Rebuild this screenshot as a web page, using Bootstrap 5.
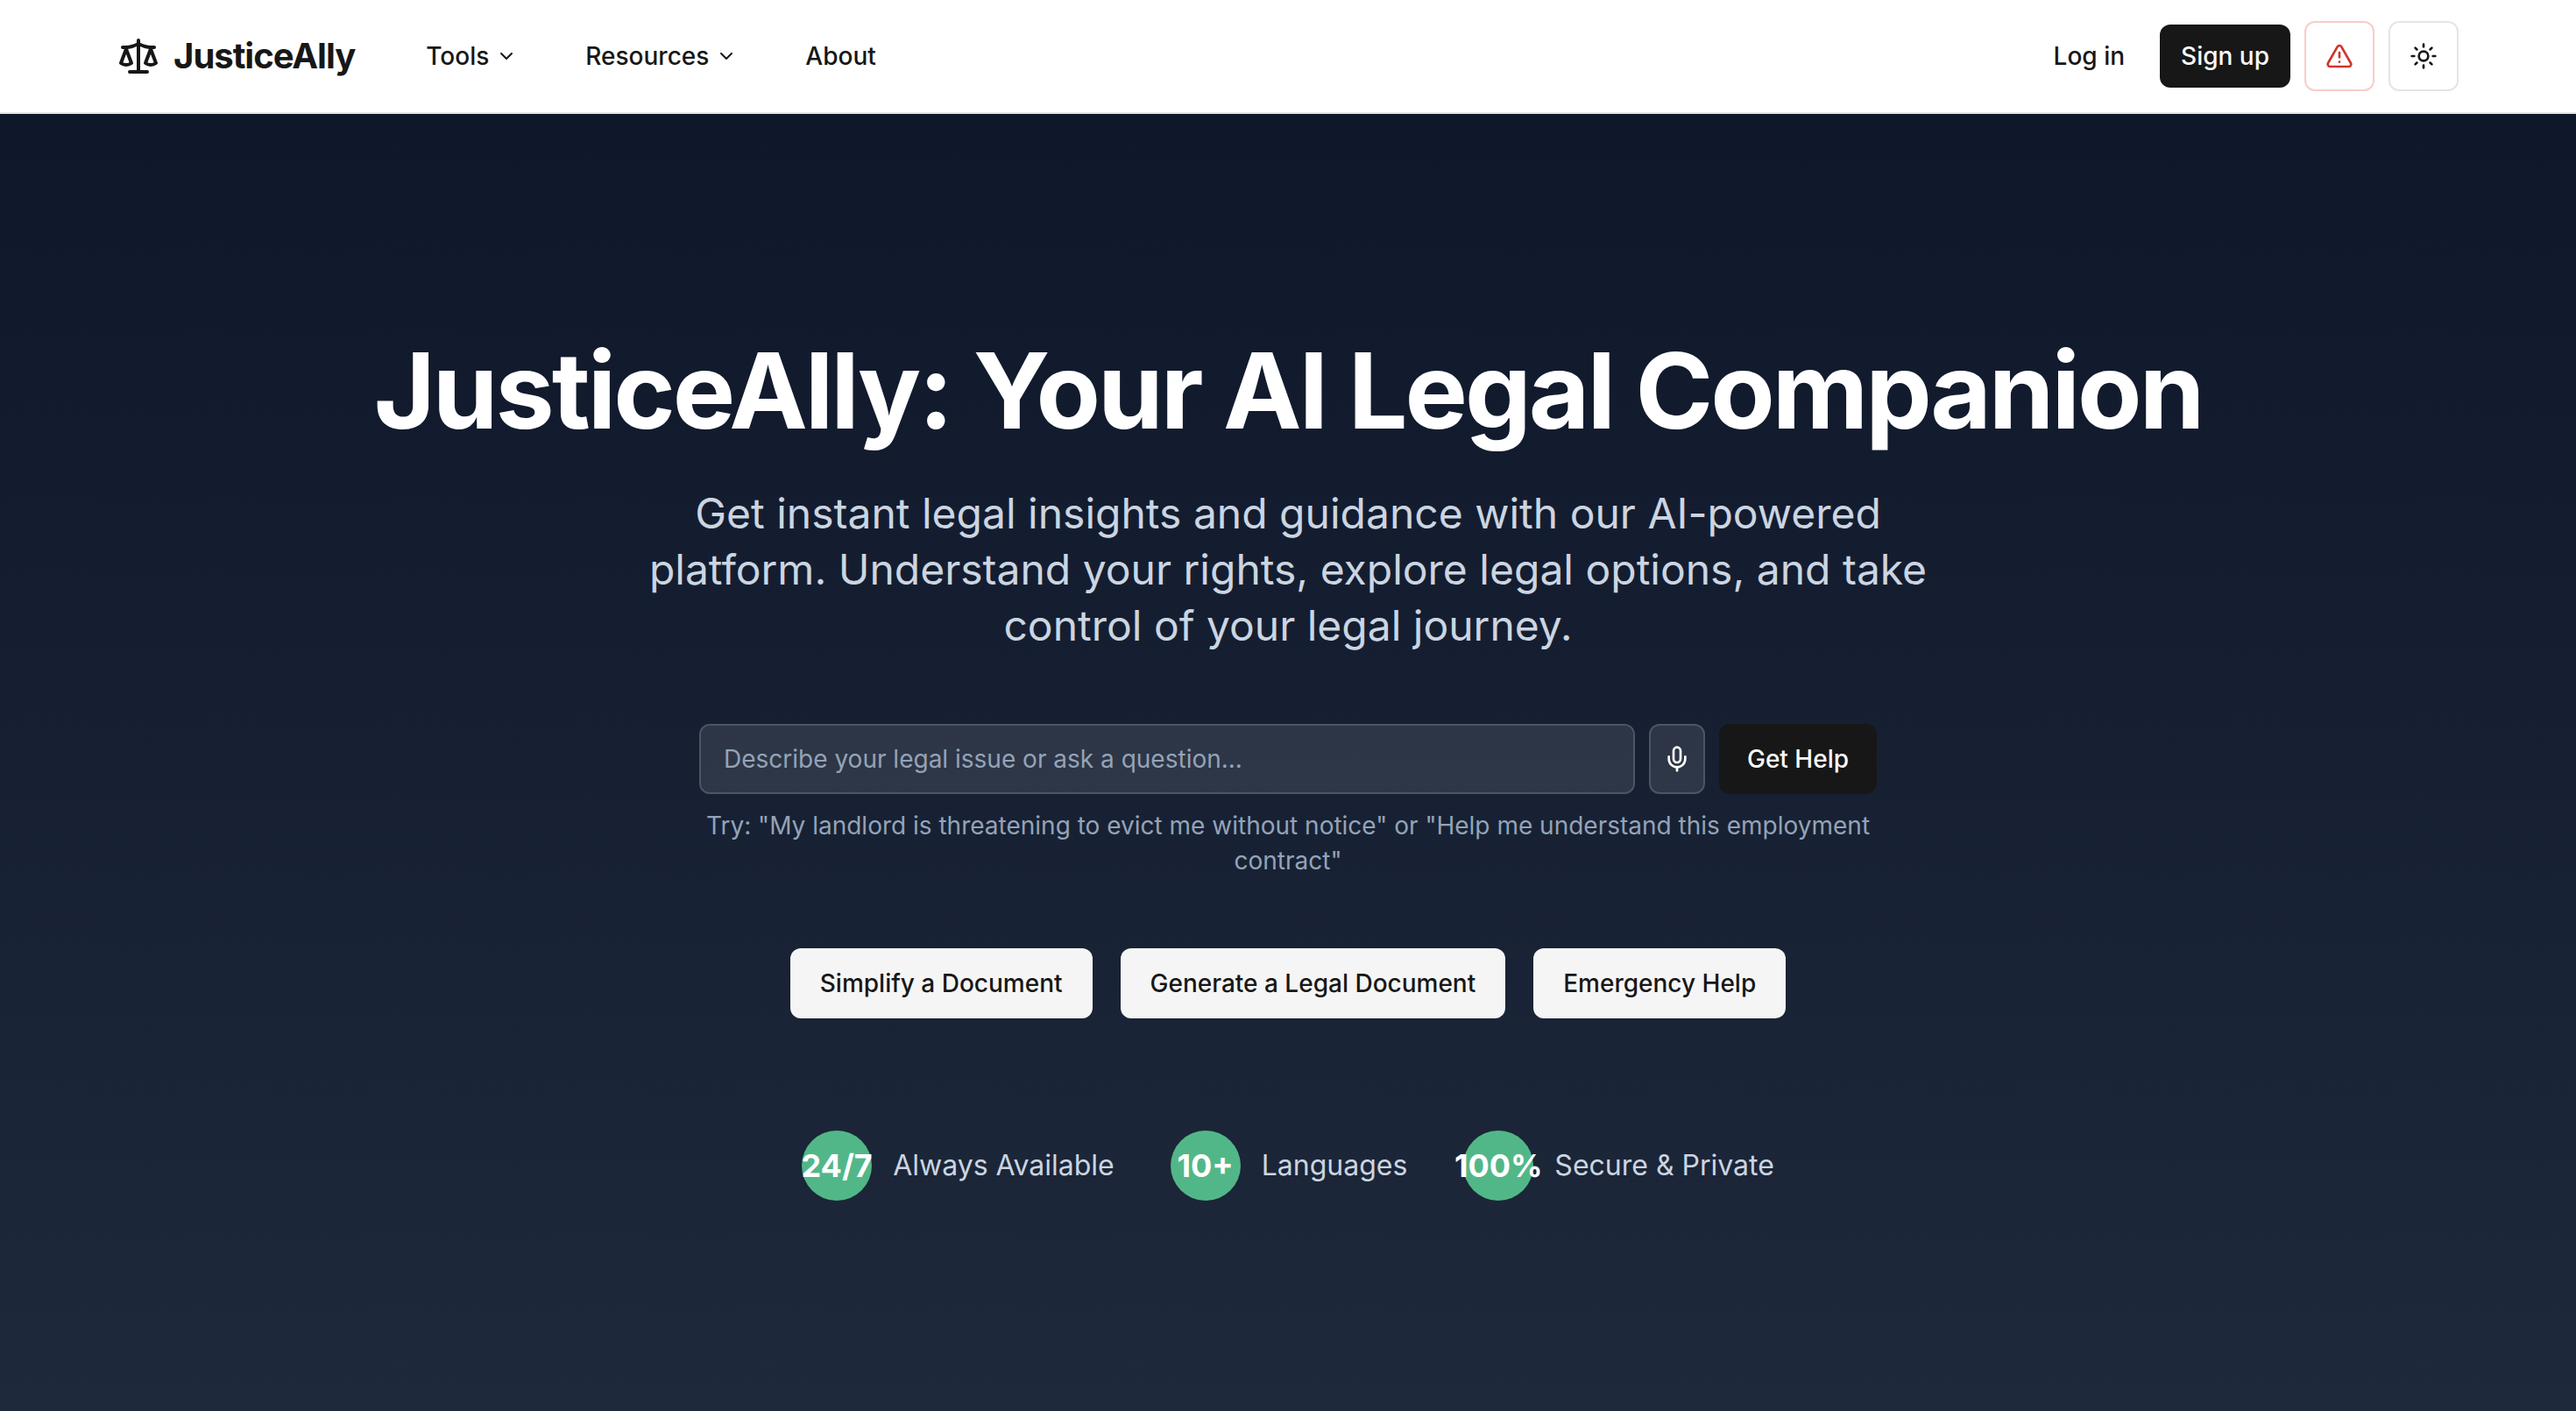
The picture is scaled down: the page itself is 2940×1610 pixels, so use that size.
<!DOCTYPE html>
<html lang="en">
<head>
    <meta charset="UTF-8">
    <meta name="viewport" content="width=device-width, initial-scale=1.0">
    <title>JusticeAlly</title>
    <link href="https://cdn.jsdelivr.net/npm/bootstrap@5.3.0/dist/css/bootstrap.min.css" rel="stylesheet">
    <style>
        body {
            font-family: Inter, "Liberation Sans", sans-serif;
            background-color: #1e293b;
            min-height: 1610px;
        }
        svg {
            fill: none;
            stroke: currentColor;
            stroke-linecap: round;
            stroke-linejoin: round;
            stroke-width: 2;
            flex-shrink: 0;
        }
        .top-bar {
            height: 130px;
            padding: 0 134px;
            background-color: #fff;
            border-bottom: 2px solid #e5e5e5;
        }
        .brand-link {
            gap: 16px;
            margin-right: 81px;
            font-size: 40px;
            font-weight: 700;
            letter-spacing: -1px;
            color: #171717;
            text-decoration: none;
        }
        .menu-links {
            gap: 78px;
        }
        .menu-link {
            gap: 8px;
            font-size: 28px;
            font-weight: 500;
            color: #171717;
            text-decoration: none;
        }
        .top-actions {
            gap: 16px;
        }
        .act-btn {
            height: 72px;
            padding: 0 24px;
            font-size: 28px;
            font-weight: 500;
            border: 0;
            border-radius: 12px;
            color: #171717;
        }
        .act-dark {
            background-color: #171717;
            color: #fafafa;
        }
        .square-btn {
            width: 80px;
            height: 80px;
            padding: 0;
            border-radius: 12px;
            border: 2px solid #e5e5e5;
            background-color: #fff;
            color: #171717;
        }
        .square-alert {
            border-color: #f8cdcb;
            color: #d0342c;
        }
        .hero {
            min-height: 1480px;
            padding-top: 256px;
            background: linear-gradient(to bottom, #0f172a, #1e293b);
        }
        .hero-title {
            margin: 0 0 48px;
            font-size: 120px;
            line-height: 120px;
            font-weight: 700;
            letter-spacing: -3px;
            color: #fff;
        }
        .hero-sub {
            width: 1536px;
            margin: 0 auto 80px;
            font-size: 48px;
            line-height: 64px;
            color: #cbd5e1;
        }
        .ask-form {
            width: 1344px;
            gap: 16px;
        }
        .ask-input {
            height: 80px;
            padding: 0 26px;
            font-size: 28px;
            color: #fff;
            background-color: rgba(255, 255, 255, .1);
            border: 2px solid #4b5563;
            border-radius: 12px;
        }
        .ask-input::placeholder {
            color: #94a3b8;
        }
        .mic-btn {
            width: 64px;
            height: 80px;
            padding: 0;
            color: #fff;
            background-color: rgba(255, 255, 255, .1);
            border: 2px solid #4b5563;
            border-radius: 12px;
        }
        .help-btn {
            width: 180px;
            height: 80px;
            padding: 0;
            font-size: 28px;
            font-weight: 500;
            color: #fafafa;
            background-color: #171717;
            border: 0;
            border-radius: 12px;
        }
        .hint-text {
            width: 1344px;
            margin: 16px auto 80px;
            font-size: 28px;
            line-height: 40px;
            color: #94a3b8;
        }
        .quick-row {
            gap: 32px;
            margin-bottom: 128px;
        }
        .quick-btn {
            height: 80px;
            padding: 0 34px;
            font-size: 28px;
            font-weight: 500;
            color: #171717;
            background-color: #f5f5f5;
            border: 0;
            border-radius: 12px;
        }
        .stat-row {
            gap: 64px;
        }
        .stat-item {
            gap: 24px;
            font-size: 32px;
            color: #cbd5e1;
        }
        .stat-dot {
            width: 80px;
            height: 80px;
            font-size: 36px;
            font-weight: 700;
            white-space: nowrap;
            color: #fff;
            background-color: #52b788;
            border-radius: 50%;
        }
    </style>
</head>
<body>
    <nav class="top-bar d-flex align-items-center justify-content-between">
        <div class="d-flex align-items-center">
            <a href="#" class="brand-link d-flex align-items-center">
                <svg width="48" height="48" viewBox="0 0 24 24">
                    <path d="m16 16 3-8 3 8c-.87.65-1.92 1-3 1s-2.13-.35-3-1Z"/>
                    <path d="m2 16 3-8 3 8c-.87.65-1.92 1-3 1s-2.13-.35-3-1Z"/>
                    <path d="M7 21h10"/>
                    <path d="M12 3v18"/>
                    <path d="M3 7h2c2 0 5-1 7-2 2 1 5 2 7 2h2"/>
                </svg>
                JusticeAlly
            </a>
            <div class="menu-links d-flex align-items-center">
                <a href="#" class="menu-link d-flex align-items-center">Tools
                    <svg width="24" height="24" viewBox="0 0 24 24"><path d="m6 9 6 6 6-6"/></svg>
                </a>
                <a href="#" class="menu-link d-flex align-items-center">Resources
                    <svg width="24" height="24" viewBox="0 0 24 24"><path d="m6 9 6 6 6-6"/></svg>
                </a>
                <a href="#" class="menu-link">About</a>
            </div>
        </div>
        <div class="top-actions d-flex align-items-center">
            <button type="button" class="btn act-btn">Log in</button>
            <button type="button" class="btn act-btn act-dark">Sign up</button>
            <button type="button" class="btn square-btn square-alert d-flex align-items-center justify-content-center" aria-label="Emergency">
                <svg width="32" height="32" viewBox="0 0 24 24">
                    <path d="m21.73 18-8-14a2 2 0 0 0-3.48 0l-8 14A2 2 0 0 0 4 21h16a2 2 0 0 0 1.73-3"/>
                    <path d="M12 9v4"/>
                    <path d="M12 17h.01"/>
                </svg>
            </button>
            <button type="button" class="btn square-btn d-flex align-items-center justify-content-center" aria-label="Toggle theme">
                <svg width="32" height="32" viewBox="0 0 24 24">
                    <circle cx="12" cy="12" r="4"/>
                    <path d="M12 2v2"/>
                    <path d="M12 20v2"/>
                    <path d="m4.93 4.93 1.41 1.41"/>
                    <path d="m17.66 17.66 1.41 1.41"/>
                    <path d="M2 12h2"/>
                    <path d="M20 12h2"/>
                    <path d="m6.34 17.66-1.41 1.41"/>
                    <path d="m19.07 4.93-1.41 1.41"/>
                </svg>
            </button>
        </div>
    </nav>

    <main class="hero text-center">
        <h1 class="hero-title">JusticeAlly: Your AI Legal Companion</h1>
        <p class="hero-sub">Get instant legal insights and guidance with our AI-powered platform. Understand your rights, explore legal options, and take control of your legal journey.</p>

        <form class="ask-form d-flex mx-auto" onsubmit="return false">
            <input type="text" class="form-control ask-input flex-grow-1" placeholder="Describe your legal issue or ask a question...">
            <button type="button" class="btn mic-btn d-flex align-items-center justify-content-center flex-shrink-0" aria-label="Voice input">
                <svg width="32" height="32" viewBox="0 0 24 24">
                    <path d="M12 2a3 3 0 0 0-3 3v7a3 3 0 0 0 6 0V5a3 3 0 0 0-3-3Z"/>
                    <path d="M19 10v2a7 7 0 0 1-14 0v-2"/>
                    <path d="M12 19v3"/>
                </svg>
            </button>
            <button type="submit" class="btn help-btn flex-shrink-0">Get Help</button>
        </form>
        <p class="hint-text">Try: "My landlord is threatening to evict me without notice" or "Help me understand this employment contract"</p>

        <div class="quick-row d-flex justify-content-center">
            <button type="button" class="btn quick-btn">Simplify a Document</button>
            <button type="button" class="btn quick-btn">Generate a Legal Document</button>
            <button type="button" class="btn quick-btn">Emergency Help</button>
        </div>

        <div class="stat-row d-flex justify-content-center">
            <div class="stat-item d-flex align-items-center">
                <div class="stat-dot d-flex align-items-center justify-content-center">24/7</div>
                <span>Always Available</span>
            </div>
            <div class="stat-item d-flex align-items-center">
                <div class="stat-dot d-flex align-items-center justify-content-center">10+</div>
                <span>Languages</span>
            </div>
            <div class="stat-item d-flex align-items-center">
                <div class="stat-dot d-flex align-items-center justify-content-center">100%</div>
                <span>Secure &amp; Private</span>
            </div>
        </div>
    </main>

    <script src="https://cdn.jsdelivr.net/npm/bootstrap@5.3.0/dist/js/bootstrap.bundle.min.js"></script>
</body>
</html>
